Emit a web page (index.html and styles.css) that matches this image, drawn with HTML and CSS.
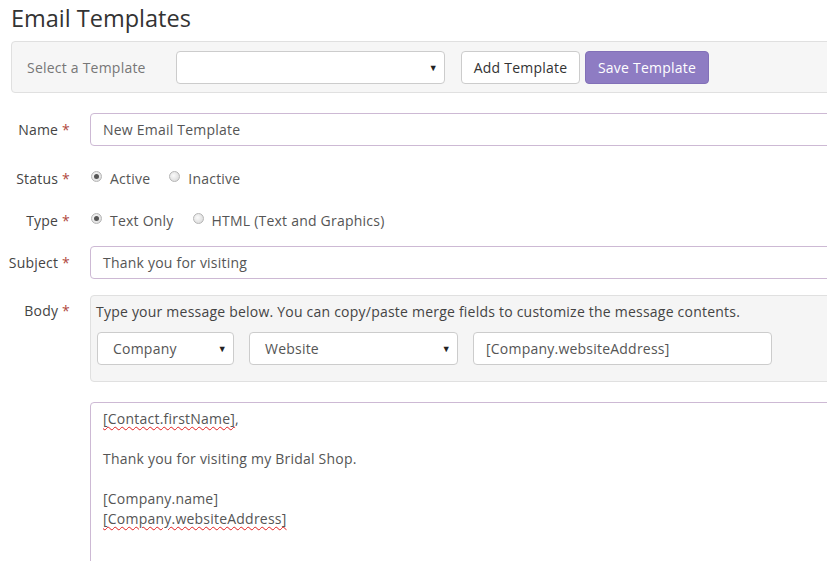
FILE: index.html
```html
<!DOCTYPE html>
<html>
<head>
<meta charset="utf-8">
<link rel="stylesheet" href="styles.css">
</head>
<body>
<div class="page">
  <h1 class="title">Email Templates</h1>
  <div class="toolbar">
    <span class="toolbar-label">Select a Template</span>
    <div class="select tpl-select"><span></span><span class="arrow">▼</span></div>
    <button class="btn btn-default">Add Template</button>
    <button class="btn btn-primary">Save Template</button>
  </div>

  <div class="form">
    <div class="row row-name">
      <label class="lbl">Name <span class="req">*</span></label>
      <div class="input wide">New Email Template</div>
    </div>
    <div class="row row-radio">
      <label class="lbl">Status <span class="req">*</span></label>
      <div class="radios">
        <span class="opt"><span class="radio checked"></span>Active</span>
        <span class="opt"><span class="radio"></span>Inactive</span>
      </div>
    </div>
    <div class="row row-radio">
      <label class="lbl">Type <span class="req">*</span></label>
      <div class="radios">
        <span class="opt"><span class="radio checked"></span>Text Only</span>
        <span class="opt"><span class="radio"></span>HTML (Text and Graphics)</span>
      </div>
    </div>
    <div class="row row-subject">
      <label class="lbl">Subject <span class="req">*</span></label>
      <div class="input wide">Thank you for visiting</div>
    </div>
    <div class="row row-body">
      <label class="lbl lbl-top">Body <span class="req">*</span></label>
      <div class="body-col">
        <div class="merge-panel">
          <div class="merge-help">Type your message below. You can copy/paste merge fields to customize the message contents.</div>
          <div class="merge-controls">
            <div class="select sel-company"><span>Company</span><span class="arrow">▼</span></div>
            <div class="select sel-website"><span>Website</span><span class="arrow">▼</span></div>
            <div class="input merge-field">[Company.websiteAddress]</div>
          </div>
        </div>
        <div class="textarea">
          <div><span class="spell">[Contact.firstName]</span>,</div>
          <div>&nbsp;</div>
          <div>Thank you for visiting my Bridal Shop.</div>
          <div>&nbsp;</div>
          <div>[Company.name]</div>
          <div><span class="spell">[Company.websiteAddress]</span></div>
        </div>
      </div>
    </div>
  </div>
</div>
</body>
</html>
```
FILE: styles.css
```css
html, body {
  margin: 0;
  padding: 0;
  background: #fff;
  overflow: hidden;
}
body {
  font-family: "Open Sans", "Liberation Sans", sans-serif;
  font-size: 14px;
  letter-spacing: 0.22px;
  color: #555;
  width: 827px;
  height: 561px;
}
.page {
  width: 900px;
}
.title {
  margin: 4px 0 0 11px;
  font-size: 23.5px;
  letter-spacing: 0;
  font-weight: 400;
  line-height: 28px;
  color: #333;
  height: 37px;
}
.toolbar {
  margin-left: 11px;
  width: 900px;
  height: 52px;
  box-sizing: border-box;
  border: 1px solid #e0e0e0;
  border-radius: 4px;
  background: #f6f6f6;
  display: flex;
  align-items: center;
  padding-left: 15px;
}
.toolbar-label {
  width: 149px;
  color: #777;
  font-size: 14px;
}
.select {
  box-sizing: border-box;
  height: 33px;
  border: 1px solid #ccc;
  border-radius: 4px;
  background: #fff;
  display: flex;
  align-items: center;
  justify-content: space-between;
  padding: 0 6px 0 15px;
  color: #555;
}
.arrow {
  font-size: 9px;
  color: #222;
}
.tpl-select {
  width: 269px;
}
.btn {
  box-sizing: border-box;
  height: 33px;
  border-radius: 4px;
  font-family: inherit;
  font-size: 14px;
  letter-spacing: 0.22px;
  padding: 0 8px;
}
.btn-default {
  margin-left: 16px;
  width: 119px;
  background: #fff;
  border: 1px solid #ccc;
  color: #333;
}
.btn-primary {
  margin-left: 5px;
  width: 124px;
  background: #8e7cc3;
  border: 1px solid #8270b8;
  color: #fff;
}
.form {
  margin-top: 20px;
}
.row {
  display: flex;
  align-items: center;
}
.lbl {
  width: 70px;
  margin-right: 20px;
  text-align: right;
  color: #444;
  flex: none;
}
.req {
  color: #b0493e;
}
.input {
  box-sizing: border-box;
  height: 33px;
  border: 1px solid #cdb9d4;
  border-radius: 4px;
  background: #fff;
  padding: 0 12px;
  display: flex;
  align-items: center;
  color: #555;
}
.wide {
  width: 800px;
}
.row-name {
  margin-bottom: 16px;
}
.row-radio {
  height: 32px;
  margin-bottom: 10px;
}
.row-subject {
  margin-bottom: 16px;
}
.radios {
  display: flex;
  align-items: center;
  gap: 18px;
  color: #555;
}
.opt {
  display: flex;
  align-items: center;
}
.radio {
  width: 11px;
  height: 11px;
  box-sizing: border-box;
  border-radius: 50%;
  border: 1px solid #b5b5b5;
  background: radial-gradient(circle at 40% 40%, #fafafa 0, #dcdcdc 80%);
  margin: 0 8px 3px 1px;
  position: relative;
}
.radio.checked::after {
  content: "";
  position: absolute;
  left: 2px;
  top: 2px;
  width: 5px;
  height: 5px;
  border-radius: 50%;
  background: #555;
}
.row-body {
  align-items: flex-start;
}
.lbl-top {
  padding-top: 6px;
  line-height: 20px;
}
.body-col {
  width: 800px;
}
.merge-panel {
  box-sizing: border-box;
  height: 87px;
  border: 1px solid #e0e0e0;
  border-radius: 4px;
  background: #f5f5f5;
  padding: 6px 0 0 5px;
}
.merge-help {
  line-height: 20px;
  color: #444;
}
.merge-controls {
  display: flex;
  margin-top: 10px;
  gap: 15px;
  padding-left: 1px;
}
.sel-company {
  width: 137px;
}
.sel-website {
  width: 209px;
}
.merge-field {
  width: 299px;
  border-color: #ccc;
}
.textarea {
  box-sizing: border-box;
  margin-top: 20px;
  height: 200px;
  border: 1px solid #cdb9d4;
  border-radius: 4px;
  padding: 6px 12px;
  line-height: 20px;
  color: #555;
}
.spell {
  text-decoration: underline wavy #e02020;
  text-decoration-thickness: 1px;
  text-underline-offset: 2px;
}
```
